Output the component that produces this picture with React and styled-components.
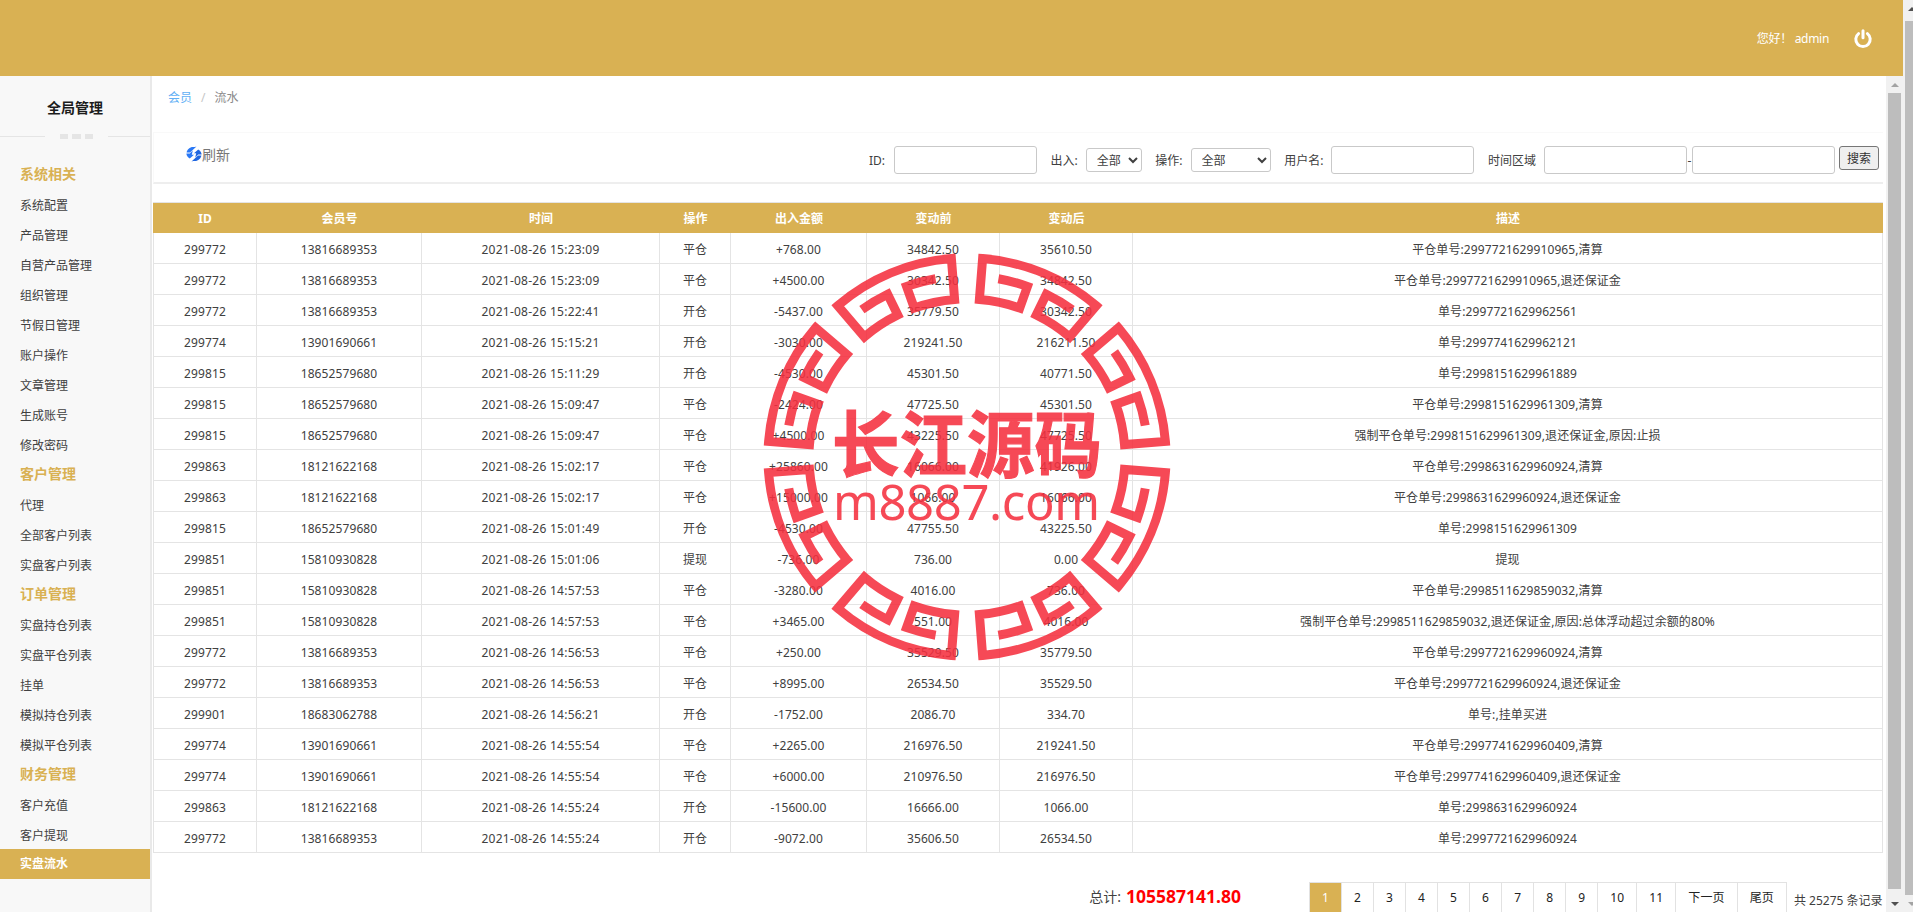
import React from "react";
import styled, { createGlobalStyle } from "styled-components";

const gold = "#d9b153";
const line = "#e4e4e4";

const GlobalStyle = createGlobalStyle`
  html, body {
    margin: 0;
    height: 912px;
    overflow: hidden;
    background: #fff;
  }
  body {
    font-family: "Noto Sans", "Noto Sans CJK SC", sans-serif;
    font-size: 12px;
    color: #404040;
  }
  * { box-sizing: border-box; }
`;

const Page = styled.div`
  display: flex;
  width: 1913px;
  height: 912px;
  overflow: hidden;
  position: relative;
`;

const Main = styled.div`
  width: 1903px;
  display: flex;
  flex-direction: column;
`;

const Header = styled.header`
  height: 76px;
  flex: none;
  background: ${gold};
  color: #fff;
  display: flex;
  align-items: center;
  justify-content: flex-end;
  padding-right: 31px;
  gap: 25px;
`;

const Greeting = styled.span`
  letter-spacing: -0.3px;
`;

const Body = styled.div`
  flex: 1;
  min-height: 0;
  display: flex;
`;

const Sidebar = styled.aside`
  width: 152px;
  flex: none;
  background: #f8f8f8;
  border-right: 2px solid #e9e9e9;
`;

const SideTitle = styled.div`
  height: 57px;
  line-height: 64px;
  text-align: center;
  font-size: 14px;
  font-weight: 700;
  color: #1c1c1c;
`;

const SideDivider = styled.div`
  display: flex;
  align-items: center;
  height: 6px;
  gap: 4px;
  margin-bottom: 20px;
  &::before, &::after {
    content: "";
    height: 1px;
    background: #e5e5e5;
  }
  &::before { width: 48px; margin-right: 11px; }
  &::after { width: 45px; margin-left: 11px; }
`;

const Dot = styled.span`
  width: 9px;
  height: 5px;
  background: #e5e5e5;
`;

const SideItem = styled.div`
  height: 30px;
  line-height: ${(p) => (p.$section || p.$active ? "30px" : "33px")};
  padding-left: 20px;
  white-space: nowrap;
  font-size: ${(p) => (p.$section ? "14px" : "12px")};
  font-weight: ${(p) => (p.$section || p.$active ? 700 : 400)};
  color: ${(p) => (p.$section ? gold : p.$active ? "#fff" : "#404040")};
  background: ${(p) => (p.$active ? gold : "transparent")};
`;

const Frame = styled.main`
  flex: 1;
  min-width: 0;
  padding-left: 1px;
  overflow: hidden;
`;

const Crumbs = styled.nav`
  height: 56px;
  padding: 13px 0 0 15px;
  line-height: 18px;
  display: flex;
  gap: 9px;
  color: #8a8a8a;
`;

const CrumbLink = styled.span`
  color: #62b0f5;
`;

const CrumbSep = styled.span`
  color: #c6c6c6;
`;

const FilterBar = styled.div`
  height: 52px;
  margin-right: 3px;
  border-top: 1px solid #f9f9f9;
  border-left: 1px solid #f9f9f9;
  border-bottom: 2px solid #eeeeee;
  display: flex;
  align-items: center;
  justify-content: space-between;
  padding: 5px 4px 0 32px;
`;

const RefreshButton = styled.div`
  display: flex;
  align-items: center;
  color: #777;
  font-size: 14px;
  margin-top: -13px;
`;

const Filters = styled.div`
  display: flex;
  align-items: center;
  gap: 13.6px;
`;

const Field = styled.label`
  display: flex;
  align-items: center;
  gap: ${(p) => p.$gap || 8}px;
`;

const TextBox = styled.input`
  width: 143px;
  height: 28px;
  border: 1px solid #c9c9c9;
  border-radius: 3px;
  padding: 0 6px;
  outline: none;
  background: #fff;
`;

const Picker = styled.select`
  width: ${(p) => p.$width}px;
  height: 24px;
  border: 1px solid #c9c9c9;
  border-radius: 3px;
  background: #fff;
  color: #404040;
  font: inherit;
  padding-left: 6px;
`;

const RangeDash = styled.span`
  width: 5px;
  margin: 0 -8px;
  text-align: center;
`;

const SearchButton = styled.button`
  width: 40px;
  height: 24px;
  margin: 0 0 4px -9.6px;
  padding: 0;
  border: 1px solid #767676;
  border-radius: 3px;
  background: #efefef;
  color: #333;
  font: inherit;
`;

const Table = styled.table`
  width: 1730px;
  margin-top: 18px;
  table-layout: fixed;
  border-collapse: separate;
  border-spacing: 0;
  border-top: 1px solid ${line};
`;

const HeadCell = styled.th`
  height: 30px;
  padding: 0;
  background: ${gold};
  color: #fff;
  font-weight: 700;
  text-align: center;
`;

const Cell = styled.td`
  height: 31px;
  padding: 2px 0 0;
  text-align: center;
  white-space: nowrap;
  letter-spacing: 0.1px;
  color: #404040;
  border-bottom: 1px solid ${line};
  border-right: 1px solid ${line};
  &:first-child {
    border-left: 1px solid ${line};
  }
  &:nth-child(3) {
    letter-spacing: 0.25px;
  }
`;

const Footer = styled.div`
  display: flex;
  align-items: center;
  justify-content: flex-end;
  padding-top: 29px;
  padding-right: 1px;
`;

const Total = styled.div`
  display: flex;
  align-items: center;
  gap: 5px;
  margin-right: 68px;
  margin-top: -7px;
  font-size: 14px;
`;

const TotalValue = styled.strong`
  color: #f00;
  font-size: 17.5px;
`;

const Pager = styled.div`
  display: flex;
  height: 34px;
  border-top: 1px solid #e2e2e2;
  border-right: 1px solid #e2e2e2;
  letter-spacing: 0.15px;
`;

const PageItem = styled.span`
  padding: 0 12px;
  line-height: 30px;
  border-left: 1px solid #e2e2e2;
  color: ${(p) => (p.$active ? "#fff" : "#222")};
  background: ${(p) => (p.$active ? gold : "#fff")};
`;

const PageCount = styled.span`
  width: 91px;
  margin: 2px 0 0 7px;
  white-space: nowrap;
`;

const Track = styled.div`
  width: ${(p) => p.$width}px;
  flex: none;
  background: #f1f1f1;
  overflow: hidden;
`;

const TrackInner = styled.div`
  width: 17px;
  height: 100%;
  display: flex;
  flex-direction: column;
`;

const TrackButton = styled.div`
  height: 17px;
  flex: none;
  display: flex;
  align-items: center;
  justify-content: center;
  &::before {
    content: "";
    border-left: 4px solid transparent;
    border-right: 4px solid transparent;
    ${(p) => (p.$down ? "border-top" : "border-bottom")}: 4px solid ${(p) => p.$color};
  }
`;

const Thumb = styled.div`
  width: 13px;
  height: ${(p) => p.$height}px;
  margin: ${(p) => p.$top}px 2px auto;
  background: #bdbdbd;
`;

const Stamp = styled.svg`
  position: absolute;
  left: 757px;
  top: 247px;
  width: 420px;
  height: 420px;
  opacity: 0.88;
  pointer-events: none;
`;

const StampPath = styled.path`
  fill: none;
  stroke: #f5303f;
  stroke-width: 9;
  stroke-linejoin: miter;
`;

const StampTitle = styled.text`
  fill: #f5303f;
  stroke: #f5303f;
  stroke-width: 1.2;
  font-family: "Noto Sans CJK SC", sans-serif;
  font-weight: 700;
  font-size: 72px;
`;

const StampUrl = styled.text`
  fill: #f5303f;
  font-family: "Noto Sans", sans-serif;
  font-size: 49px;
`;

const widths = [104, 165, 238, 71, 136, 133, 133, 750];
const heads = ["ID", "会员号", "时间", "操作", "出入金额", "变动前", "变动后", "描述"];

const menu = [
  ["系统相关", true],
  ["系统配置"], ["产品管理"], ["自营产品管理"], ["组织管理"], ["节假日管理"],
  ["账户操作"], ["文章管理"], ["生成账号"], ["修改密码"],
  ["客户管理", true],
  ["代理"], ["全部客户列表"], ["实盘客户列表"],
  ["订单管理", true],
  ["实盘持仓列表"], ["实盘平仓列表"], ["挂单"], ["模拟持仓列表"], ["模拟平仓列表"],
  ["财务管理", true],
  ["客户充值"], ["客户提现"],
];

const rows = [
  ["299772", "13816689353", "15:23:09", "平仓", "+768.00", "34842.50", "35610.50", "平仓单号:2997721629910965,清算"],
  ["299772", "13816689353", "15:23:09", "平仓", "+4500.00", "30342.50", "34842.50", "平仓单号:2997721629910965,退还保证金"],
  ["299772", "13816689353", "15:22:41", "开仓", "-5437.00", "35779.50", "30342.50", "单号:2997721629962561"],
  ["299774", "13901690661", "15:15:21", "开仓", "-3030.00", "219241.50", "216211.50", "单号:2997741629962121"],
  ["299815", "18652579680", "15:11:29", "开仓", "-4530.00", "45301.50", "40771.50", "单号:2998151629961889"],
  ["299815", "18652579680", "15:09:47", "平仓", "-2424.00", "47725.50", "45301.50", "平仓单号:2998151629961309,清算"],
  ["299815", "18652579680", "15:09:47", "平仓", "+4500.00", "43225.50", "47725.50", "强制平仓单号:2998151629961309,退还保证金,原因:止损"],
  ["299863", "18121622168", "15:02:17", "平仓", "+25860.00", "16066.00", "41926.00", "平仓单号:2998631629960924,清算"],
  ["299863", "18121622168", "15:02:17", "平仓", "+15000.00", "1066.00", "16066.00", "平仓单号:2998631629960924,退还保证金"],
  ["299815", "18652579680", "15:01:49", "开仓", "-4530.00", "47755.50", "43225.50", "单号:2998151629961309"],
  ["299851", "15810930828", "15:01:06", "提现", "-736.00", "736.00", "0.00", "提现"],
  ["299851", "15810930828", "14:57:53", "平仓", "-3280.00", "4016.00", "736.00", "平仓单号:2998511629859032,清算"],
  ["299851", "15810930828", "14:57:53", "平仓", "+3465.00", "551.00", "4016.00", "强制平仓单号:2998511629859032,退还保证金,原因:总体浮动超过余额的80%"],
  ["299772", "13816689353", "14:56:53", "平仓", "+250.00", "35529.50", "35779.50", "平仓单号:2997721629960924,清算"],
  ["299772", "13816689353", "14:56:53", "平仓", "+8995.00", "26534.50", "35529.50", "平仓单号:2997721629960924,退还保证金"],
  ["299901", "18683062788", "14:56:21", "开仓", "-1752.00", "2086.70", "334.70", "单号:,挂单买进"],
  ["299774", "13901690661", "14:55:54", "平仓", "+2265.00", "216976.50", "219241.50", "平仓单号:2997741629960409,清算"],
  ["299774", "13901690661", "14:55:54", "平仓", "+6000.00", "210976.50", "216976.50", "平仓单号:2997741629960409,退还保证金"],
  ["299863", "18121622168", "14:55:24", "开仓", "-15600.00", "16666.00", "1066.00", "单号:2998631629960924"],
  ["299772", "13816689353", "14:55:24", "开仓", "-9072.00", "35606.50", "26534.50", "单号:2997721629960924"],
];

const pages = ["1", "2", "3", "4", "5", "6", "7", "8", "9", "10", "11", "下一页", "尾页"];

// one key-pattern arc of the seal, angles measured from the vertical axis
const polar = (r, deg) => {
  const a = (deg * Math.PI) / 180;
  return `${(r * Math.sin(a)).toFixed(2)} ${(-r * Math.cos(a)).toFixed(2)}`;
};
const arc = (r, deg, sweep) => `A${r} ${r} 0 0 ${sweep} ${polar(r, deg)}`;
const keyArc = [
  `M${polar(181, 10)}`,
  arc(181, 19.5, 1),
  `L${polar(158, 19.5)}`,
  arc(158, 4.5, 0),
  `L${polar(199, 4.5)}`,
  arc(199, 40.5, 1),
  `L${polar(158, 40.5)}`,
  arc(158, 26, 0),
  `L${polar(181, 26)}`,
  arc(181, 35.5, 1),
].join(" ");

const sealTransforms = [
  "",
  "scale(-1 1)",
  "scale(1 -1)",
  "scale(-1 -1)",
  "matrix(0 1 1 0 0 0)",
  "matrix(0 1 -1 0 0 0)",
  "matrix(0 -1 1 0 0 0)",
  "matrix(0 -1 -1 0 0 0)",
];

const PowerIcon = () => (
  <svg width="18" height="19" viewBox="0 0 18 19" fill="none" stroke="#fff" strokeWidth="3" strokeLinecap="round">
    <path d="M9 1.8v7" />
    <path d="M4.6 4.6a7.2 7.2 0 1 0 8.8 0" />
  </svg>
);

const RefreshIcon = () => (
  <svg width="16" height="16" viewBox="0 0 16 16">
    <path fill="#2a78f5" d="M10.5 0.5 4 6.5H0.6C1 3.6 3.8 1 7 1c1.2 0 2.4 0 3.5-.5ZM6.8 4.6l-1 4.2H8L3.8 12.6C1.6 11.4.5 9.6.4 7.6h3.4l3-3Z" />
    <path fill="#1f66e0" d="M5.5 15.5 12 9.5h3.4c-.4 2.9-3.2 5.5-6.4 5.5-1.2 0-2.4 0-3.5.5ZM9.2 11.4l1-4.2H8l4.2-3.8c2.2 1.2 3.3 3 3.4 5h-3.4l-3 3Z" />
  </svg>
);

const ScrollBar = ({ width, thumbTop, thumbHeight, upColor, downColor }) => (
  <Track $width={width}>
    <TrackInner>
      <TrackButton $color={upColor} />
      <Thumb $top={thumbTop} $height={thumbHeight} />
      <TrackButton $down $color={downColor} />
    </TrackInner>
  </Track>
);

export default function App() {
  return (
    <Page>
      <GlobalStyle />
      <Main>
        <Header>
          <Greeting>您好！ admin</Greeting>
          <PowerIcon />
        </Header>
        <Body>
          <Sidebar>
            <SideTitle>全局管理</SideTitle>
            <SideDivider>
              <Dot />
              <Dot />
              <Dot />
            </SideDivider>
            {menu.map(([label, section]) => (
              <SideItem key={label} $section={section}>
                {label}
              </SideItem>
            ))}
            <SideItem $active>实盘流水</SideItem>
          </Sidebar>
          <Frame>
            <Crumbs>
              <CrumbLink>会员</CrumbLink>
              <CrumbSep>/</CrumbSep>
              <span>流水</span>
            </Crumbs>
            <FilterBar>
              <RefreshButton>
                <RefreshIcon />
                刷新
              </RefreshButton>
              <Filters>
                <Field $gap={9}>
                  ID:
                  <TextBox />
                </Field>
                <Field>
                  出入:
                  <Picker $width={56}>
                    <option>全部</option>
                  </Picker>
                </Field>
                <Field>
                  操作:
                  <Picker $width={80}>
                    <option>全部</option>
                  </Picker>
                </Field>
                <Field>
                  用户名:
                  <TextBox />
                </Field>
                <Field>
                  时间区域
                  <TextBox />
                  <RangeDash>-</RangeDash>
                  <TextBox />
                </Field>
                <SearchButton>搜索</SearchButton>
              </Filters>
            </FilterBar>
            <Table>
              <colgroup>
                {widths.map((w, i) => (
                  <col key={i} style={{ width: w }} />
                ))}
              </colgroup>
              <thead>
                <tr>
                  {heads.map((h) => (
                    <HeadCell key={h}>{h}</HeadCell>
                  ))}
                </tr>
              </thead>
              <tbody>
                {rows.map((r, i) => (
                  <tr key={i}>
                    <Cell>{r[0]}</Cell>
                    <Cell>{r[1]}</Cell>
                    <Cell>2021-08-26 {r[2]}</Cell>
                    <Cell>{r[3]}</Cell>
                    <Cell>{r[4]}</Cell>
                    <Cell>{r[5]}</Cell>
                    <Cell>{r[6]}</Cell>
                    <Cell>{r[7]}</Cell>
                  </tr>
                ))}
              </tbody>
            </Table>
            <Footer>
              <Total>
                总计:
                <TotalValue>105587141.80</TotalValue>
              </Total>
              <Pager>
                {pages.map((p) => (
                  <PageItem key={p} $active={p === "1"}>
                    {p}
                  </PageItem>
                ))}
              </Pager>
              <PageCount>共 25275 条记录</PageCount>
            </Footer>
          </Frame>
          <ScrollBar width={17} thumbTop={0} thumbHeight={796} upColor="#a3a3a3" downColor="#505050" />
        </Body>
      </Main>
      <ScrollBar width={10} thumbTop={4} thumbHeight={881} upColor="#505050" downColor="#a3a3a3" />
      <Stamp viewBox="-210 -210 420 420">
        {sealTransforms.map((t) => (
          <StampPath key={t} d={keyArc} transform={t} />
        ))}
        <StampTitle x="-135" y="14" textLength="270" lengthAdjust="spacingAndGlyphs">
          长江源码
        </StampTitle>
        <StampUrl x="-134" y="63" textLength="267">
          m8887.com
        </StampUrl>
      </Stamp>
    </Page>
  );
}
